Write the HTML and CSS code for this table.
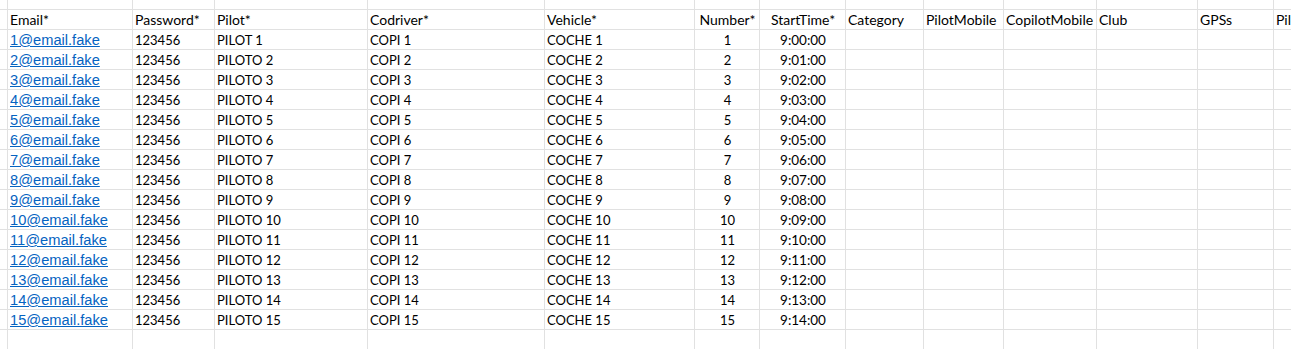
FILE: index.html
```html
<!DOCTYPE html>
<html lang="es">
<head>
<meta charset="utf-8">
<title>Hoja</title>
<link rel="stylesheet" href="styles.css">
</head>
<body>
<div class="sheet">
  <div class="row spacer"><div class="cell edge"></div><div class="cell"></div><div class="cell"></div><div class="cell"></div><div class="cell"></div><div class="cell"></div><div class="cell"></div><div class="cell"></div><div class="cell"></div><div class="cell"></div><div class="cell"></div><div class="cell"></div><div class="cell"></div><div class="cell last"></div></div>

  <div class="row head"><div class="cell edge"></div><div class="cell">Email*</div><div class="cell">Password*</div><div class="cell">Pilot*</div><div class="cell">Codriver*</div><div class="cell">Vehicle*</div><div class="cell center">Number*</div><div class="cell center">StartTime*</div><div class="cell">Category</div><div class="cell">PilotMobile</div><div class="cell">CopilotMobile</div><div class="cell">Club</div><div class="cell">GPSs</div><div class="cell last">PilotGPS</div></div>

  <div class="row data"><div class="cell edge"></div><div class="cell"><a class="link" href="#">1@email.fake</a></div><div class="cell">123456</div><div class="cell">PILOT 1</div><div class="cell">COPI 1</div><div class="cell">COCHE 1</div><div class="cell center">1</div><div class="cell center time">9:00:00</div><div class="cell"></div><div class="cell"></div><div class="cell"></div><div class="cell"></div><div class="cell"></div><div class="cell last"></div></div>

  <div class="row data"><div class="cell edge"></div><div class="cell"><a class="link" href="#">2@email.fake</a></div><div class="cell">123456</div><div class="cell">PILOTO 2</div><div class="cell">COPI 2</div><div class="cell">COCHE 2</div><div class="cell center">2</div><div class="cell center time">9:01:00</div><div class="cell"></div><div class="cell"></div><div class="cell"></div><div class="cell"></div><div class="cell"></div><div class="cell last"></div></div>

  <div class="row data"><div class="cell edge"></div><div class="cell"><a class="link" href="#">3@email.fake</a></div><div class="cell">123456</div><div class="cell">PILOTO 3</div><div class="cell">COPI 3</div><div class="cell">COCHE 3</div><div class="cell center">3</div><div class="cell center time">9:02:00</div><div class="cell"></div><div class="cell"></div><div class="cell"></div><div class="cell"></div><div class="cell"></div><div class="cell last"></div></div>

  <div class="row data"><div class="cell edge"></div><div class="cell"><a class="link" href="#">4@email.fake</a></div><div class="cell">123456</div><div class="cell">PILOTO 4</div><div class="cell">COPI 4</div><div class="cell">COCHE 4</div><div class="cell center">4</div><div class="cell center time">9:03:00</div><div class="cell"></div><div class="cell"></div><div class="cell"></div><div class="cell"></div><div class="cell"></div><div class="cell last"></div></div>

  <div class="row data"><div class="cell edge"></div><div class="cell"><a class="link" href="#">5@email.fake</a></div><div class="cell">123456</div><div class="cell">PILOTO 5</div><div class="cell">COPI 5</div><div class="cell">COCHE 5</div><div class="cell center">5</div><div class="cell center time">9:04:00</div><div class="cell"></div><div class="cell"></div><div class="cell"></div><div class="cell"></div><div class="cell"></div><div class="cell last"></div></div>

  <div class="row data"><div class="cell edge"></div><div class="cell"><a class="link" href="#">6@email.fake</a></div><div class="cell">123456</div><div class="cell">PILOTO 6</div><div class="cell">COPI 6</div><div class="cell">COCHE 6</div><div class="cell center">6</div><div class="cell center time">9:05:00</div><div class="cell"></div><div class="cell"></div><div class="cell"></div><div class="cell"></div><div class="cell"></div><div class="cell last"></div></div>

  <div class="row data"><div class="cell edge"></div><div class="cell"><a class="link" href="#">7@email.fake</a></div><div class="cell">123456</div><div class="cell">PILOTO 7</div><div class="cell">COPI 7</div><div class="cell">COCHE 7</div><div class="cell center">7</div><div class="cell center time">9:06:00</div><div class="cell"></div><div class="cell"></div><div class="cell"></div><div class="cell"></div><div class="cell"></div><div class="cell last"></div></div>

  <div class="row data"><div class="cell edge"></div><div class="cell"><a class="link" href="#">8@email.fake</a></div><div class="cell">123456</div><div class="cell">PILOTO 8</div><div class="cell">COPI 8</div><div class="cell">COCHE 8</div><div class="cell center">8</div><div class="cell center time">9:07:00</div><div class="cell"></div><div class="cell"></div><div class="cell"></div><div class="cell"></div><div class="cell"></div><div class="cell last"></div></div>

  <div class="row data"><div class="cell edge"></div><div class="cell"><a class="link" href="#">9@email.fake</a></div><div class="cell">123456</div><div class="cell">PILOTO 9</div><div class="cell">COPI 9</div><div class="cell">COCHE 9</div><div class="cell center">9</div><div class="cell center time">9:08:00</div><div class="cell"></div><div class="cell"></div><div class="cell"></div><div class="cell"></div><div class="cell"></div><div class="cell last"></div></div>

  <div class="row data"><div class="cell edge"></div><div class="cell"><a class="link" href="#">10@email.fake</a></div><div class="cell">123456</div><div class="cell">PILOTO 10</div><div class="cell">COPI 10</div><div class="cell">COCHE 10</div><div class="cell center">10</div><div class="cell center time">9:09:00</div><div class="cell"></div><div class="cell"></div><div class="cell"></div><div class="cell"></div><div class="cell"></div><div class="cell last"></div></div>

  <div class="row data"><div class="cell edge"></div><div class="cell"><a class="link" href="#">11@email.fake</a></div><div class="cell">123456</div><div class="cell">PILOTO 11</div><div class="cell">COPI 11</div><div class="cell">COCHE 11</div><div class="cell center">11</div><div class="cell center time">9:10:00</div><div class="cell"></div><div class="cell"></div><div class="cell"></div><div class="cell"></div><div class="cell"></div><div class="cell last"></div></div>

  <div class="row data"><div class="cell edge"></div><div class="cell"><a class="link" href="#">12@email.fake</a></div><div class="cell">123456</div><div class="cell">PILOTO 12</div><div class="cell">COPI 12</div><div class="cell">COCHE 12</div><div class="cell center">12</div><div class="cell center time">9:11:00</div><div class="cell"></div><div class="cell"></div><div class="cell"></div><div class="cell"></div><div class="cell"></div><div class="cell last"></div></div>

  <div class="row data"><div class="cell edge"></div><div class="cell"><a class="link" href="#">13@email.fake</a></div><div class="cell">123456</div><div class="cell">PILOTO 13</div><div class="cell">COPI 13</div><div class="cell">COCHE 13</div><div class="cell center">13</div><div class="cell center time">9:12:00</div><div class="cell"></div><div class="cell"></div><div class="cell"></div><div class="cell"></div><div class="cell"></div><div class="cell last"></div></div>

  <div class="row data"><div class="cell edge"></div><div class="cell"><a class="link" href="#">14@email.fake</a></div><div class="cell">123456</div><div class="cell">PILOTO 14</div><div class="cell">COPI 14</div><div class="cell">COCHE 14</div><div class="cell center">14</div><div class="cell center time">9:13:00</div><div class="cell"></div><div class="cell"></div><div class="cell"></div><div class="cell"></div><div class="cell"></div><div class="cell last"></div></div>

  <div class="row data"><div class="cell edge"></div><div class="cell"><a class="link" href="#">15@email.fake</a></div><div class="cell">123456</div><div class="cell">PILOTO 15</div><div class="cell">COPI 15</div><div class="cell">COCHE 15</div><div class="cell center">15</div><div class="cell center time">9:14:00</div><div class="cell"></div><div class="cell"></div><div class="cell"></div><div class="cell"></div><div class="cell"></div><div class="cell last"></div></div>

  <div class="row"><div class="cell edge"></div><div class="cell"></div><div class="cell"></div><div class="cell"></div><div class="cell"></div><div class="cell"></div><div class="cell"></div><div class="cell"></div><div class="cell"></div><div class="cell"></div><div class="cell"></div><div class="cell"></div><div class="cell"></div><div class="cell last"></div></div>
</div>
</body>
</html>
```
FILE: styles.css
```css
html, body {
  margin: 0;
  padding: 0;
  background: #ffffff;
  overflow: hidden;
}
.sheet {
  display: grid;
  grid-template-columns: 8px 125px 82px 153px 177px 150px 65px 86px 78px 80px 93px 101px 76px 17px;
  grid-template-rows: 10px;
  grid-auto-rows: 20px;
  font-family: "Lato", "Liberation Sans", sans-serif;
  font-size: 14px;
  color: #000000;
}
.row {
  display: contents;
}
.cell {
  box-sizing: border-box;
  border-right: 1px solid #e1e1e1;
  border-bottom: 1px solid #e1e1e1;
  padding: 0 1px 0 2px;
  line-height: 19px;
  white-space: nowrap;
  overflow: hidden;
}
.row.data .cell {
  font-size: 13px;
  padding-top: 1px;
  line-height: 18px;
}
.row.data .cell.time {
  font-size: 13.5px;
}
.cell.edge {
  padding: 0;
}
.cell.last {
  border-right: 0;
  text-overflow: clip;
}
.cell.center {
  text-align: center;
}
.link {
  font-family: "Liberation Sans", Arial, sans-serif;
  font-size: 14.67px;
  color: #0563c1;
  text-decoration: underline;
}
```
